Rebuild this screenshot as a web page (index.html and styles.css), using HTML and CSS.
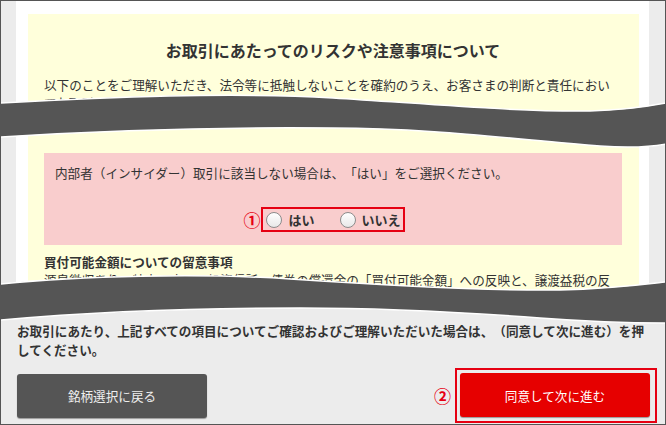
FILE: index.html
```html
<!DOCTYPE html>
<html lang="ja">
<head>
  <meta charset="UTF-8">
  <meta name="viewport" content="width=device-width, initial-scale=1.0">
  <title>お取引にあたってのリスクや注意事項について</title>
  <link rel="stylesheet" href="styles.css">
</head>
<body>
  <div class="screen">
    <div class="panel">
      <div class="notice">
        <h2 class="notice-title">お取引にあたってのリスクや注意事項について</h2>
        <p class="notice-text">以下のことをご理解いただき、法令等に抵触しないことを確約のうえ、お客さまの判断と責任においてお取引ください。</p>

        <div class="insider">
          <p class="insider-text">内部者（インサイダー）取引に該当しない場合は、「はい」をご選択ください。</p>
          <div class="choice-row">
            <div class="choice-box">
              <span class="mark mark-one">①</span>
              <label class="choice"><span class="radio"></span>はい</label>
              <label class="choice"><span class="radio"></span>いいえ</label>
            </div>
          </div>
        </div>

        <h3 class="sub-title">買付可能金額についての留意事項</h3>
        <p class="notice-text">源泉徴収ありの特定口座での投資信託、債券の償還金の「買付可能金額」への反映と、譲渡益税の反映について</p>
      </div>
    </div>

    <div class="footer">
      <p class="confirm">お取引にあたり、上記すべての項目についてご確認およびご理解いただいた場合は、（同意して次に進む）を押してください。</p>
      <div class="actions">
        <button class="btn btn-back">銘柄選択に戻る</button>
        <div class="next-wrap">
          <span class="mark">②</span>
          <div class="next-box">
            <button class="btn btn-next">同意して次に進む</button>
          </div>
        </div>
      </div>
    </div>

    <!-- cut marks over the long page -->
    <svg class="cuts" width="666" height="425" viewBox="0 0 666 425">
      <path d="M0 103 C110 97 230 92 333 98 C430 104 520 112 590 111 C630 110 650 106 666 103 L666 144 C650 147 630 148 600 146 C520 140 430 128 333 128 C230 127 110 130 0 137 Z" />
      <path d="M0 284 C80 276 200 273 290 279 C380 285 480 291 560 290 C610 289 640 285 666 282 L666 323 C620 323 580 321 540 318 C460 312 380 308 300 308 C200 308 90 312 0 320 Z" />
    </svg>
  </div>
</body>
</html>
```

FILE: styles.css
```css
* {
  box-sizing: border-box;
}
body {
  margin: 0;
  font-family: "Noto Sans CJK JP", "Noto Sans", sans-serif;
  color: #333;
  text-spacing-trim: space-all;
}
.screen {
  position: relative;
  width: 666px;
  height: 425px;
  border: 1px solid #555;
  background: #ececec;
  overflow: hidden;
}
.panel {
  display: flex;
  flex-direction: column;
  height: 304px;
  margin: 0 16px 0 15px;
  padding: 13px 10px 0 12px;
  background: #fff;
}
.notice {
  flex: 1;
  padding: 24px 17px 0 16px;
  background: #ffffdb;
}
.notice-title {
  margin: 0;
  font-size: 16px;
  line-height: 24px;
  font-weight: bold;
  text-align: center;
}
.notice-text {
  margin: 14px 0 0;
  font-size: 12.6px;
  line-height: 18px;
}
.insider {
  margin-top: 41px;
  padding: 11px 11px 13px 11px;
  background: #f9cdcd;
}
.insider-text {
  margin: 0;
  font-size: 12.6px;
  line-height: 18px;
}
.choice-row {
  display: flex;
  justify-content: center;
  margin-top: 25px;
}
.choice-box {
  position: relative;
  display: flex;
  align-items: center;
  padding: 2px 2px 2px 3px;
  border: 2px solid #e60012;
}
.choice {
  display: flex;
  align-items: center;
  gap: 6px;
  font-size: 13px;
  line-height: 17px;
  font-weight: bold;
}
.choice + .choice {
  margin-left: 25px;
}
.radio {
  width: 16px;
  height: 16px;
  border: 1px solid #8c8c8c;
  border-radius: 50%;
  background: linear-gradient(#fff, #e8e8e8);
}
.mark {
  color: #e60012;
  font-size: 17px;
  line-height: 20px;
  font-weight: bold;
}
.mark-one {
  position: absolute;
  right: calc(100% + 3px);
  top: 50%;
  transform: translateY(-50%);
}
.sub-title {
  margin: 8px 0 0;
  font-size: 12.6px;
  line-height: 18px;
  font-weight: bold;
}
.sub-title + .notice-text {
  margin-top: 0;
}
.footer {
  padding: 16px 8px 0 16px;
}
.confirm {
  margin: 0 7px 0 0;
  font-size: 12.6px;
  line-height: 19px;
  font-weight: bold;
}
.actions {
  display: flex;
  justify-content: space-between;
  align-items: center;
  margin-top: 9px;
}
.btn {
  width: 190px;
  height: 44px;
  border: none;
  border-radius: 3px;
  font-family: inherit;
  font-size: 12.6px;
  box-shadow: 0 1px 1px rgba(0,0,0,0.35);
  cursor: pointer;
}
.btn-back {
  background: #555;
  color: #eee;
}
.btn-next {
  display: block;
  background: #e60000;
  color: #fff;
}
.next-wrap {
  display: flex;
  align-items: center;
  gap: 4px;
}
.next-box {
  padding: 3px 5px 4px 3px;
  border: 2px solid #e60012;
}
.cuts {
  position: absolute;
  top: -1px;
  left: -1px;
  pointer-events: none;
}
.cuts path {
  fill: #555;
  stroke: #fff;
  stroke-width: 1.5;
}
```
